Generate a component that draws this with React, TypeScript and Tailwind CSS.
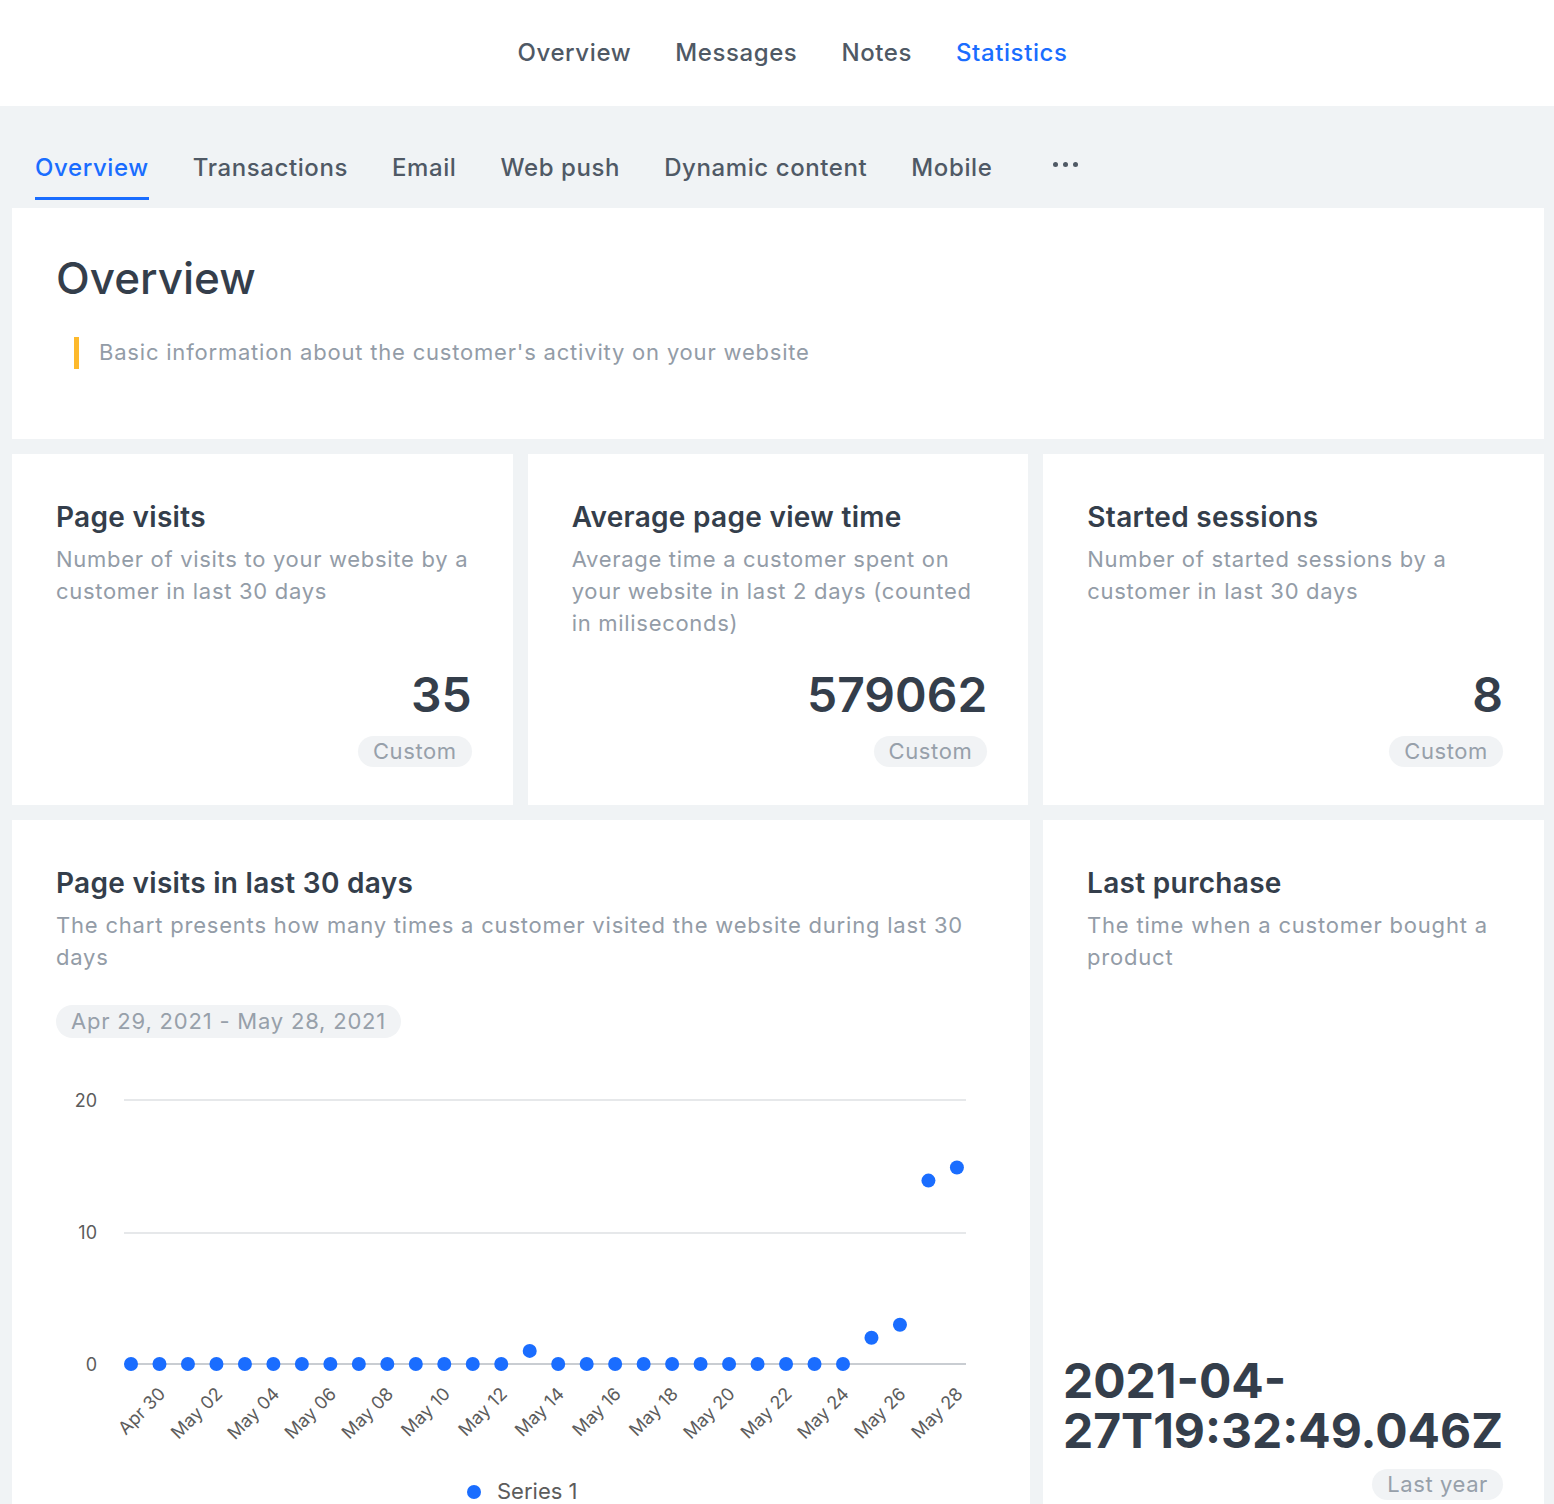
import React from 'react';

const FONT = { fontFamily: 'Inter, "Noto Sans", sans-serif' };

// visits per day, Apr 29 -> May 28
const VISITS = [0, 0, 0, 0, 0, 0, 0, 0, 0, 0, 0, 0, 0, 0, 1, 0, 0, 0, 0, 0, 0, 0, 0, 0, 0, 0, 2, 3, 14, 15];

const labelFor = (i: number) => {
  if (i === 0) return 'Apr 29';
  if (i === 1) return 'Apr 30';
  const d = i - 1;
  return `May ${d < 10 ? '0' + d : d}`;
};

const Badge: React.FC<{ children: React.ReactNode }> = ({ children }) => (
  <span className="inline-flex h-[31px] items-center rounded-full bg-[#f1f3f5] px-[15px] text-[22px] tracking-[0.6px] text-[#97a0aa]">
    {children}
  </span>
);

const StatCard: React.FC<{ title: string; desc: string; value: string; badge: string }> = ({ title, desc, value, badge }) => (
  <div className="flex flex-col bg-white pl-[44px] pr-[41px] pt-[46px] pb-[38px]">
    <h3 className="text-[28px] leading-[34px] font-semibold tracking-[0.3px] text-[#343e4b]">{title}</h3>
    <p className="mt-[9px] text-[22px] leading-[32px] tracking-[0.7px] text-[#939ca7]">{desc}</p>
    <div className="mt-auto flex flex-col items-end pt-[26px]">
      <div className="text-[48px] leading-[60px] font-semibold text-[#343e4b]">{value}</div>
      <div className="mt-[11px]">
        <Badge>{badge}</Badge>
      </div>
    </div>
  </div>
);

const Chart: React.FC = () => {
  const x0 = 75;
  const step = 28.48;
  const base = 303;
  const unit = 13.1;
  return (
    <svg width={930} height={445} className="mt-[23px] block overflow-visible">
      {/* grid */}
      <line x1={68} x2={910} y1={39} y2={39} stroke="#e6e8ea" strokeWidth={2} />
      <line x1={68} x2={910} y1={172} y2={172} stroke="#e6e8ea" strokeWidth={2} />
      <line x1={68} x2={910} y1={303} y2={303} stroke="#c9cdd2" strokeWidth={2} />
      {[
        ['20', 41],
        ['10', 173],
        ['0', 305],
      ].map(([t, y]) => (
        <text key={t} x={41} y={y as number} textAnchor="end" dominantBaseline="middle" fontSize={18} fill="#5c5c5c">
          {t}
        </text>
      ))}
      {VISITS.map((v, i) => (
        <circle key={i} cx={x0 + i * step} cy={base - v * unit} r={7} fill="#1a6dff" />
      ))}
      {VISITS.map((_, i) =>
        i % 2 === 1 ? (
          <text
            key={'l' + i}
            x={x0 + i * step + 7}
            y={334}
            textAnchor="end"
            fontSize={18}
            fill="#5c5c5c"
            transform={`rotate(-45 ${x0 + i * step + 7} 334)`}
          >
            {labelFor(i)}
          </text>
        ) : null
      )}
      {/* legend */}
      <circle cx={418} cy={431} r={7} fill="#1a6dff" />
      <text x={441} y={432} dominantBaseline="middle" fontSize={22} fill="#5c5c5c">
        Series 1
      </text>
    </svg>
  );
};

const App: React.FC = () => {
  const topNav = ['Overview', 'Messages', 'Notes', 'Statistics'];
  const tabs = ['Overview', 'Transactions', 'Email', 'Web push', 'Dynamic content', 'Mobile'];

  return (
    <div style={FONT} className="min-h-screen bg-[#f0f3f5]">
      {/* Top navigation */}
      <header className="flex h-[106px] items-center justify-center gap-[44px] bg-white pl-[31px]">
        {topNav.map(n => (
          <span
            key={n}
            className={`text-[24px] font-medium tracking-[0.6px] ${n === 'Statistics' ? 'text-[#1a6dff]' : 'text-[#4f5965]'}`}
          >
            {n}
          </span>
        ))}
      </header>

      {/* Sub tabs */}
      <nav className="flex h-[102px] items-end gap-[44px] pl-[35px]">
        {tabs.map(t => (
          <div key={t} className="flex flex-col">
            <span
              className={`text-[24px] leading-[30px] font-medium tracking-[0.6px] ${t === 'Overview' ? 'text-[#1a6dff]' : 'text-[#4f5965]'}`}
            >
              {t}
            </span>
            <span className={`mt-[14px] mb-[8px] h-[3px] ${t === 'Overview' ? 'bg-[#1a6dff]' : 'bg-transparent'}`} />
          </div>
        ))}
        <div className="ml-[17px] flex h-[61px] items-start gap-[5px] pt-[15px]">
          <span className="h-[5px] w-[5px] rounded-full bg-[#4f5965]" />
          <span className="h-[5px] w-[5px] rounded-full bg-[#4f5965]" />
          <span className="h-[5px] w-[5px] rounded-full bg-[#4f5965]" />
        </div>
      </nav>

      <main className="flex flex-col gap-[15px] pl-[12px] pr-[10px]">
        {/* Overview */}
        <section className="bg-white pl-[44px] pt-[44px] pb-[70px]">
          <h1 className="text-[44px] leading-[52px] font-medium text-[#343e4b]">Overview</h1>
          <div className="mt-[32px] ml-[18px] flex items-center gap-[20px]">
            <span className="h-[32px] w-[5px] bg-[#fdb92c]" />
            <p className="text-[22px] tracking-[0.8px] text-[#939ca7]">
              Basic information about the customer's activity on your website
            </p>
          </div>
        </section>

        {/* Stat cards */}
        <div className="grid grid-cols-3 gap-[15px]">
          <StatCard title="Page visits" desc="Number of visits to your website by a customer in last 30 days" value="35" badge="Custom" />
          <StatCard
            title="Average page view time"
            desc="Average time a customer spent on your website in last 2 days (counted in miliseconds)"
            value="579062"
            badge="Custom"
          />
          <StatCard title="Started sessions" desc="Number of started sessions by a customer in last 30 days" value="8" badge="Custom" />
        </div>

        {/* Chart + last purchase */}
        <div className="flex gap-[13px]">
          <div className="flex-1 bg-white pl-[44px] pr-[41px] pt-[46px] pb-[32px]">
            <h3 className="text-[28px] leading-[34px] font-semibold tracking-[0.3px] text-[#343e4b]">Page visits in last 30 days</h3>
            <p className="mt-[9px] text-[22px] leading-[32px] tracking-[0.8px] text-[#939ca7]">
              The chart presents how many times a customer visited the website during last 30 days
            </p>
            <div className="mt-[32px]">
              <span className="inline-flex h-[33px] items-center rounded-full bg-[#f1f3f5] px-[15px] text-[22px] tracking-[0.8px] text-[#97a0aa]">
                Apr 29, 2021 - May 28, 2021
              </span>
            </div>
            <Chart />
          </div>

          <div className="flex w-[501px] flex-col bg-white pl-[44px] pr-[41px] pt-[46px] pb-[38px]">
            <h3 className="text-[28px] leading-[34px] font-semibold tracking-[0.3px] text-[#343e4b]">Last purchase</h3>
            <p className="mt-[9px] text-[22px] leading-[32px] tracking-[0.8px] text-[#939ca7]">
              The time when a customer bought a product
            </p>
            <div className="mt-auto flex flex-col items-end">
              <div className="text-left text-[48px] leading-[50px] font-bold text-[#343e4b]">
                2021-04-
                <br />
                27T19:32:49.046Z
              </div>
              <div className="mt-[13px]">
                <Badge>Last year</Badge>
              </div>
            </div>
          </div>
        </div>
      </main>
    </div>
  );
};

export default App;
